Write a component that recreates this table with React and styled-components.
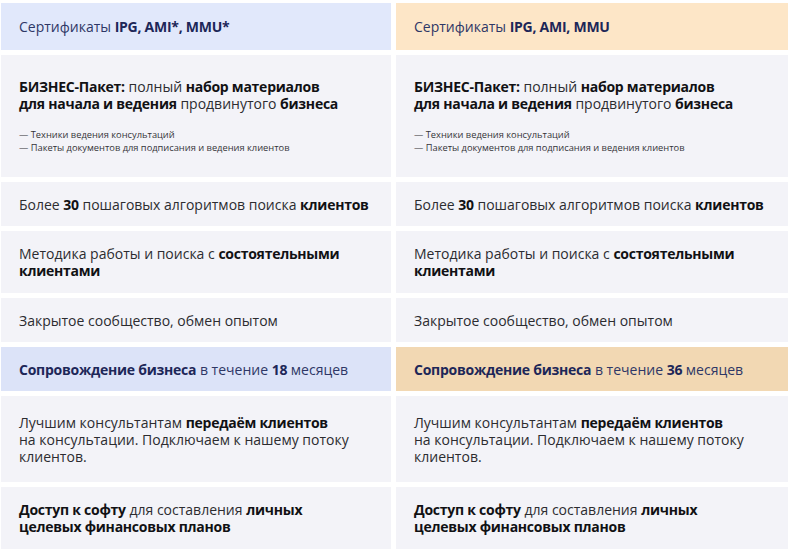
import React from "react";
import styled, { createGlobalStyle } from "styled-components";

const GlobalStyle = createGlobalStyle`
  html, body {
    margin: 0;
    padding: 0;
    background: #ffffff;
    overflow: hidden;
  }
  body {
    font-family: "Open Sans", "Noto Sans", sans-serif;
  }
`;

const rows = [47, 122, 44, 62, 44, 44, 86, 62];

const plans = [
  { tone: "blue", certs: "IPG, AMI*, MMU*", months: 18 },
  { tone: "sand", certs: "IPG, AMI, MMU", months: 36 },
];

const tones = {
  blue: { head: "#e1e8fb", accent: "#dce3f8" },
  sand: { head: "#fde6c7", accent: "#f2d8b3" },
};

export default function App() {
  return (
    <>
      <GlobalStyle />
      <Table>
        {plans.map((p) => (
          <Column key={p.tone}>
            <Cell $bg={tones[p.tone].head} $h={rows[0]}>
              <HeadText>
                Сертификаты <b>{p.certs}</b>
              </HeadText>
            </Cell>
            <Cell $h={rows[1]}>
              <Text>
                <b>БИЗНЕС-Пакет:</b> полный <b>набор материалов</b>
                <br />
                <b>для начала и ведения</b> продвинутого <b>бизнеса</b>
              </Text>
              <List>
                <li>— Техники ведения консультаций</li>
                <li>— Пакеты документов для подписания и ведения клиентов</li>
              </List>
            </Cell>
            <Cell $h={rows[2]}>
              <Text>
                Более <b>30</b> пошаговых алгоритмов поиска <b>клиентов</b>
              </Text>
            </Cell>
            <Cell $h={rows[3]}>
              <Text>
                Методика работы и поиска с <b>состоятельными</b>
                <br />
                <b>клиентами</b>
              </Text>
            </Cell>
            <Cell $h={rows[4]}>
              <Text>Закрытое сообщество, обмен опытом</Text>
            </Cell>
            <Cell $bg={tones[p.tone].accent} $h={rows[5]}>
              <HeadText>
                <b>Сопровождение бизнеса</b> в течение <b>{p.months}</b> месяцев
              </HeadText>
            </Cell>
            <Cell $h={rows[6]}>
              <Text>
                Лучшим консультантам <b>передаём клиентов</b>
                <br />
                на консультации. Подключаем к нашему потоку
                <br />
                клиентов.
              </Text>
            </Cell>
            <Cell $h={rows[7]}>
              <Text>
                <b>Доступ к софту</b> для составления <b>личных</b>
                <br />
                <b>целевых финансовых планов</b>
              </Text>
            </Cell>
          </Column>
        ))}
      </Table>
    </>
  );
}

const Table = styled.div`
  display: grid;
  grid-template-columns: 390px 400px;
  column-gap: 5px;
  padding: 3px 0 0 1px;
  width: 800px;
`;

const Column = styled.div`
  display: flex;
  flex-direction: column;
  gap: 5px;
`;

const Cell = styled.div`
  display: flex;
  flex-direction: column;
  justify-content: center;
  box-sizing: border-box;
  height: ${(p) => p.$h}px;
  padding: 0 12px 0 18px;
  background: ${(p) => p.$bg || "#f3f3f8"};
`;

const Text = styled.p`
  margin: 0;
  font-size: 14px;
  line-height: 17px;
  color: #2c2c30;
  white-space: nowrap;

  b {
    font-weight: 700;
    letter-spacing: -0.25px;
    color: #111114;
  }
`;

const HeadText = styled(Text)`
  color: #2e3766;

  b {
    color: #1d2758;
  }
`;

const List = styled.ul`
  list-style: none;
  margin: 16px 0 0;
  padding: 0;
  font-size: 9.3px;
  line-height: 13px;
  color: #333338;
`;
